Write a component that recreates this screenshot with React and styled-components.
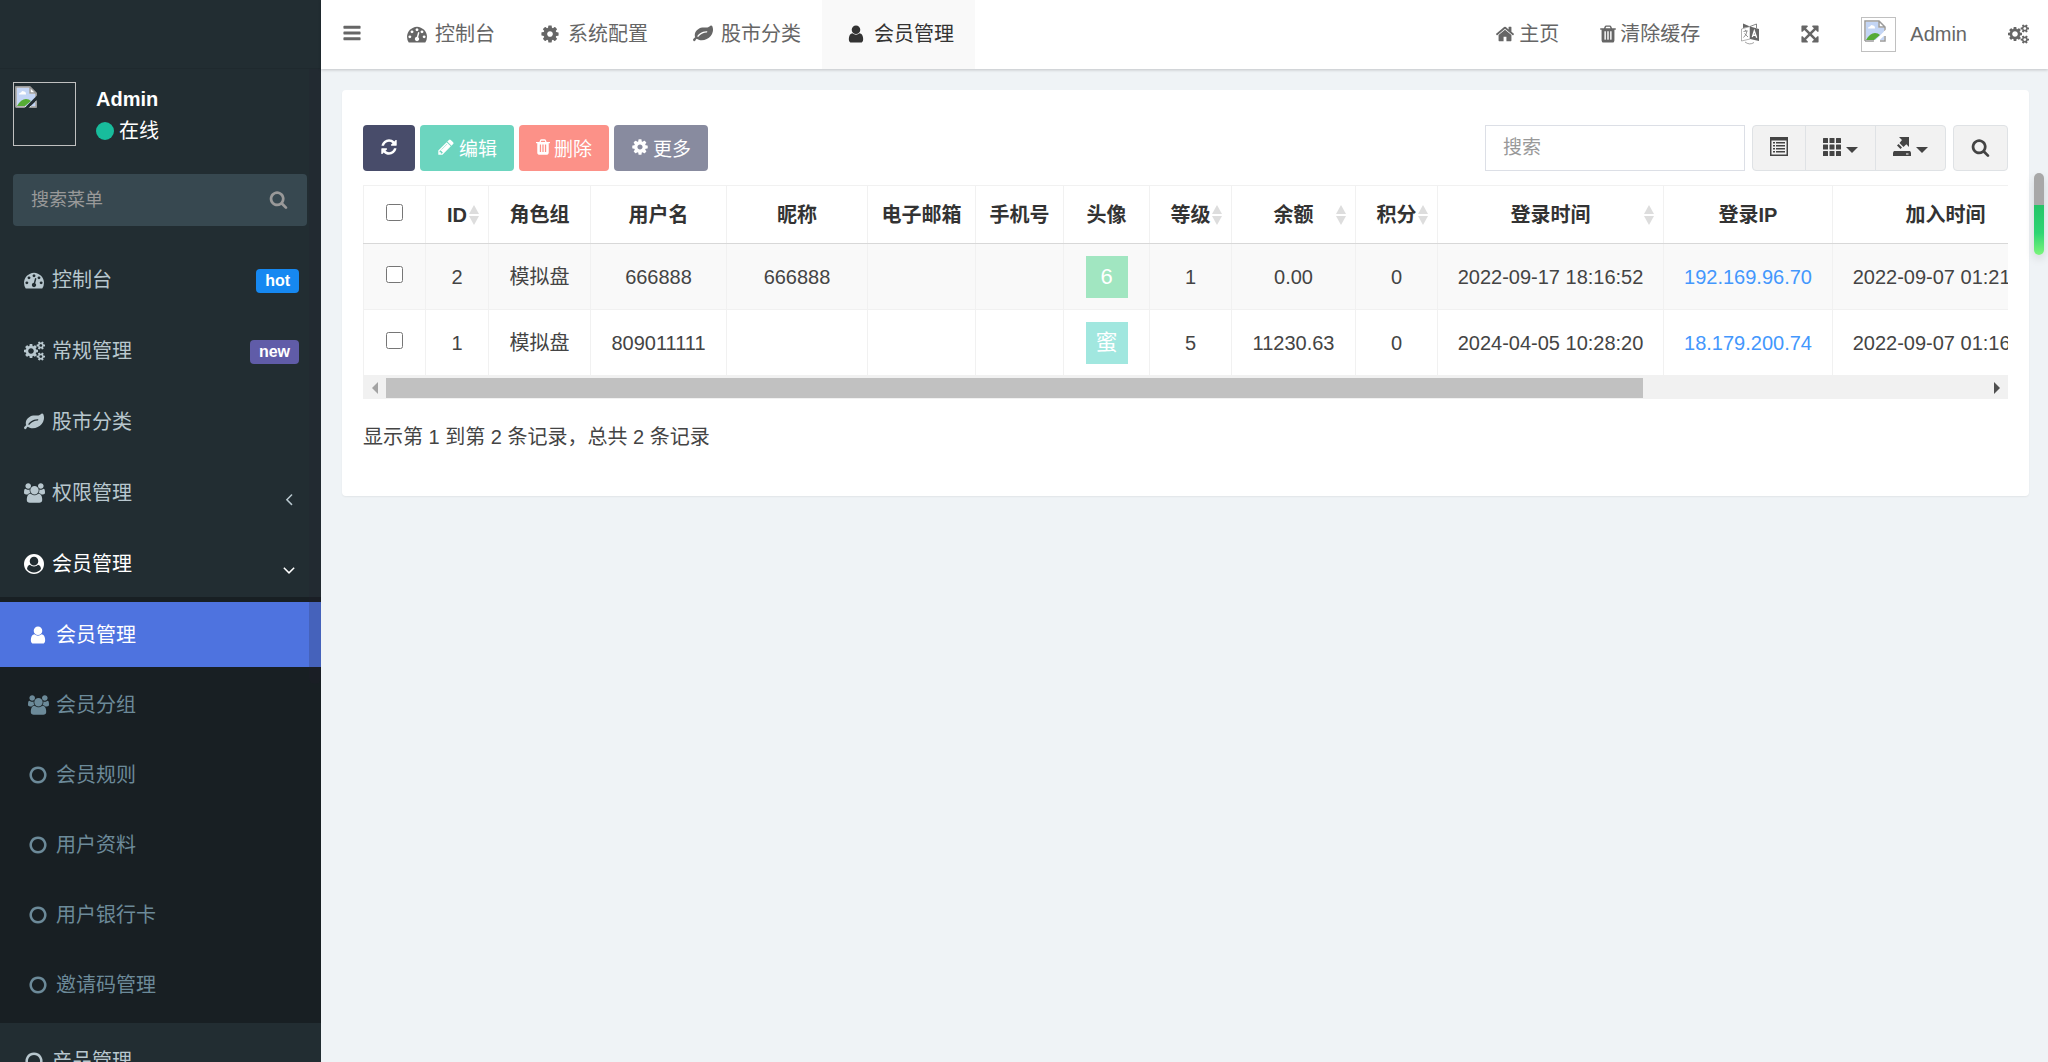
import React from 'react';
import styled, { createGlobalStyle, css } from 'styled-components';

const GlobalStyle = createGlobalStyle`
  * {
    box-sizing: border-box;
  }
  body {
    margin: 0;
    background: #eff3f6;
    color: #444;
    font-family: "Liberation Sans", "Noto Sans CJK SC", sans-serif;
    font-size: 20px;
    line-height: 28px;
  }
  a {
    text-decoration: none;
  }
  button, input {
    font-family: inherit;
  }
`;

/* ---------- icons ---------- */

const ICONS = {
  bars: 'M1664 1344v128q0 26-19 45t-45 19h-1408q-26 0-45-19t-19-45v-128q0-26 19-45t45-19h1408q26 0 45 19t19 45zm0-512v128q0 26-19 45t-45 19h-1408q-26 0-45-19t-19-45v-128q0-26 19-45t45-19h1408q26 0 45 19t19 45zm0-512v128q0 26-19 45t-45 19h-1408q-26 0-45-19t-19-45v-128q0-26 19-45t45-19h1408q26 0 45 19t19 45z',
  dashboard: 'M384 1152q0-53-37.5-90.5t-90.5-37.5-90.5 37.5-37.5 90.5 37.5 90.5 90.5 37.5 90.5-37.5 37.5-90.5zm192-448q0-53-37.5-90.5t-90.5-37.5-90.5 37.5-37.5 90.5 37.5 90.5 90.5 37.5 90.5-37.5 37.5-90.5zm428 481l101-382q6-26-7.5-48.5t-38.5-29.5-48 6.5-30 39.5l-101 382q-60 5-107 43.5t-63 98.5q-20 77 20 146t117 89 146-20 89-117q16-60-6-117t-72-91zm660-33q0-53-37.5-90.5t-90.5-37.5-90.5 37.5-37.5 90.5 37.5 90.5 90.5 37.5 90.5-37.5 37.5-90.5zm-640-640q0-53-37.5-90.5t-90.5-37.5-90.5 37.5-37.5 90.5 37.5 90.5 90.5 37.5 90.5-37.5 37.5-90.5zm448 192q0-53-37.5-90.5t-90.5-37.5-90.5 37.5-37.5 90.5 37.5 90.5 90.5 37.5 90.5-37.5 37.5-90.5zm320 448q0 261-141 483-19 29-54 29h-1402q-35 0-54-29-141-221-141-483 0-182 71-348t191-286 286-191 348-71 348 71 286 191 191 286 71 348z',
  cog: 'M1152 896q0-106-75-181t-181-75-181 75-75 181 75 181 181 75 181-75 75-181zm512-109v222q0 12-8 23t-20 13l-185 28q-19 54-39 91 35 50 107 138 10 12 10 25t-9 23q-27 37-99 108t-94 71q-12 0-26-9l-138-108q-44 23-91 38-16 136-29 186-7 28-36 28h-222q-14 0-24.5-8.5t-11.5-21.5l-28-184q-49-16-90-37l-141 107q-10 9-25 9-14 0-25-11-126-114-165-168-7-10-7-23 0-12 8-23 15-21 51-66.5t54-70.5q-27-50-41-99l-183-27q-13-2-21-12.5t-8-23.5v-222q0-12 8-23t19-13l186-28q14-46 39-92-40-57-107-138-10-12-10-24 0-10 9-23 26-36 98.5-107.5t94.5-71.5q13 0 26 10l138 107q44-23 91-38 16-136 29-186 7-28 36-28h222q14 0 24.5 8.5t11.5 21.5l28 184q49 16 90 37l142-107q9-9 24-9 13 0 25 10 129 119 165 170 7 8 7 22 0 12-8 23-15 21-51 66.5t-54 70.5q26 50 41 98l183 28q13 2 21 12.5t8 23.5z',
  cogs: 'M896 896q0-106-75-181t-181-75-181 75-75 181 75 181 181 75 181-75 75-181zm768 512q0-52-38-90t-90-38-90 38-38 90q0 53 37.5 90.5t90.5 37.5 90.5-37.5 37.5-90.5zm0-1024q0-52-38-90t-90-38-90 38-38 90q0 53 37.5 90.5t90.5 37.5 90.5-37.5 37.5-90.5zm-384 421v185q0 10-7 19.5t-16 10.5l-155 24q-11 35-32 76 34 48 90 115 7 11 7 20 0 12-7 19-23 30-82.5 89.5t-78.5 59.5q-11 0-21-7l-115-90q-37 19-77 31-11 108-23 155-7 24-30 24h-186q-11 0-20-7.5t-10-17.5l-23-153q-34-10-75-31l-118 89q-7 7-20 7-11 0-21-8-144-133-144-160 0-9 7-19 10-14 41-53t47-61q-23-44-35-82l-152-24q-10-1-17-9.5t-7-19.5v-185q0-10 7-19.5t16-10.5l155-24q11-35 32-76-34-48-90-115-7-11-7-20 0-12 7-20 22-30 82-89t79-59q11 0 21 7l115 90q34-18 77-32 11-108 23-154 7-24 30-24h186q11 0 20 7.5t10 17.5l23 153q34 10 75 31l118-89q8-7 20-7 11 0 21 8 144 133 144 160 0 8-7 19-12 16-42 54t-45 60q23 48 34 82l152 23q10 2 17 10.5t7 19.5zm640 533v140q0 16-149 31-12 27-30 52 51 113 51 138 0 4-4 7-122 71-124 71-8 0-46-47t-52-68q-20 2-30 2t-30-2q-14 21-52 68t-46 47q-2 0-124-71-4-3-4-7 0-25 51-138-18-25-30-52-149-15-149-31v-140q0-16 149-31 13-29 30-52-51-113-51-138 0-4 4-7 4-2 35-20t59-34 30-16q8 0 46 46.5t52 67.5q20-2 30-2t30 2q51-71 92-112l6-2q4 0 124 70 4 3 4 7 0 25-51 138 17 23 30 52 149 15 149 31zm0-1024v140q0 16-149 31-12 27-30 52 51 113 51 138 0 4-4 7-122 71-124 71-8 0-46-47t-52-68q-20 2-30 2t-30-2q-14 21-52 68t-46 47q-2 0-124-71-4-3-4-7 0-25 51-138-18-25-30-52-149-15-149-31v-140q0-16 149-31 13-29 30-52-51-113-51-138 0-4 4-7 4-2 35-20t59-34 30-16q8 0 46 46.5t52 67.5q20-2 30-2t30 2q51-71 92-112l6-2q4 0 124 70 4 3 4 7 0 25-51 138 17 23 30 52 149 15 149 31z',
  leaf: 'M1280 704q0-26-19-45t-45-19q-172 0-318 49.5t-259.5 134-235.5 219.5q-19 21-19 45 0 26 19 45t45 19q24 0 45-19 27-24 74-71t67-66q137-124 268.5-176t313.5-52q26 0 45-19t19-45zm512-198q0 95-20 193-46 224-184.5 383t-357.5 268q-214 108-438 108-148 0-286-47-15-5-88-42t-96-37q-16 0-39.5 32t-45 70-52.5 70-60 32q-43 0-63.5-17.5t-45.5-59.5q-2-4-6-11t-5.5-10-3-9.5-1.5-13.5q0-35 31-73.5t68-65.5 68-56 31-48q0-4-14-38t-16-44q-9-51-9-104 0-115 43.5-220t119-184.5 170.5-139 204-95.5q55-18 145-25.5t179.5-9 178.5-6 163.5-24 113.5-56.5l29.5-29.5 29.5-28 27-20 36.5-16 43.5-4.5q39 0 70.5 46t47.5 112 24 124 8 96z',
  group: 'M593 896q-162 5-265 128h-134q-82 0-138-40.5t-56-118.5q0-353 124-353 6 0 43.5 21t97.5 42.5 119 21.5q67 0 133-23-5 37-5 66 0 139 81 256zm1071 637q0 120-73 189.5t-194 69.5h-874q-121 0-194-69.5t-73-189.5q0-53 3.5-103.5t14-109 26.5-108.5 43-97.5 62-81 85.5-53.5 111.5-20q10 0 43 21.5t73 48 107 48 135 21.5 135-21.5 107-48 73-48 43-21.5q61 0 111.5 20t85.5 53.5 62 81 43 97.5 26.5 108.5 14 109 3.5 103.5zm-1024-1277q0 106-75 181t-181 75-181-75-75-181 75-181 181-75 181 75 75 181zm704 384q0 159-112.5 271.5t-271.5 112.5-271.5-112.5-112.5-271.5 112.5-271.5 271.5-112.5 271.5 112.5 112.5 271.5zm576 225q0 78-56 118.5t-138 40.5h-134q-103-123-265-128 81-117 81-256 0-29-5-66 66 23 133 23 59 0 119-21.5t97.5-42.5 43.5-21q124 0 124 353zm-128-609q0 106-75 181t-181 75-181-75-75-181 75-181 181-75 181 75 75 181z',
  user: 'M1536 1399q0 109-62.5 187t-150.5 78h-854q-88 0-150.5-78t-62.5-187q0-85 8.5-160.5t31.5-152 58.5-131 94-89 134.5-34.5q131 128 313 128t313-128q76 0 134.5 34.5t94 89 58.5 131 31.5 152 8.5 160.5zm-256-887q0 159-112.5 271.5t-271.5 112.5-271.5-112.5-112.5-271.5 112.5-271.5 271.5-112.5 271.5 112.5 112.5 271.5z',
  userCircle: 'M1523 1339q-22-155-87.5-257.5t-184.5-118.5q-67 74-159.5 115.5t-195.5 41.5-195.5-41.5-159.5-115.5q-119 16-184.5 118.5t-87.5 257.5q106 150 271 237.5t356 87.5 356-87.5 271-237.5zm-243-699q0-159-112.5-271.5t-271.5-112.5-271.5 112.5-112.5 271.5 112.5 271.5 271.5 112.5 271.5-112.5 112.5-271.5zm512 256q0 182-71 347.5t-190.5 286-285.5 191.5-349 71q-182 0-348-71t-286-191-191-286-71-348 71-348 191-286 286-191 348-71 348 71 286 191 191 286 71 348z',
  circle: 'M896 352q-148 0-273 73t-198 198-73 273 73 273 198 198 273 73 273-73 198-198 73-273-73-273-198-198-273-73zm768 544q0 209-103 385.5t-279.5 279.5-385.5 103-385.5-103-279.5-279.5-103-385.5 103-385.5 279.5-279.5 385.5-103 385.5 103 279.5 279.5 103 385.5z',
  angleLeft: 'M1203 544q0 13-10 23l-393 393 393 393q10 10 10 23t-10 23l-50 50q-10 10-23 10t-23-10l-466-466q-10-10-10-23t10-23l466-466q10-10 23-10t23 10l50 50q10 10 10 23z',
  angleDown: 'M1395 736q0 13-10 23l-466 466q-10 10-23 10t-23-10l-466-466q-10-10-10-23t10-23l50-50q10-10 23-10t23 10l393 393 393-393q10-10 23-10t23 10l50 50q10 10 10 23z',
  search: 'M1216 832q0-185-131.5-316.5t-316.5-131.5-316.5 131.5-131.5 316.5 131.5 316.5 316.5 131.5 316.5-131.5 131.5-316.5zm512 832q0 52-38 90t-90 38q-54 0-90-38l-343-342q-179 124-399 124-143 0-273.5-55.5t-225-150-150-225-55.5-273.5 55.5-273.5 150-225 225-150 273.5-55.5 273.5 55.5 225 150 150 225 55.5 273.5q0 220-124 399l343 343q37 37 37 90z',
  home: 'M1472 992v480q0 26-19 45t-45 19h-384v-384h-256v384h-384q-26 0-45-19t-19-45v-480q0-1 .5-3t.5-3l575-474 575 474q1 2 1 6zm223-69l-62 74q-8 9-21 11h-3q-13 0-21-7l-692-577-692 577q-12 8-24 7-13-2-21-11l-62-74q-8-10-7-23.5t11-21.5l719-599q32-26 76-26t76 26l244 204v-195q0-14 9-23t23-9h192q14 0 23 9t9 23v408l219 182q10 8 11 21.5t-7 23.5z',
  trash: 'M704 1376v-704q0-14-9-23t-23-9h-64q-14 0-23 9t-9 23v704q0 14 9 23t23 9h64q14 0 23-9t9-23zm256 0v-704q0-14-9-23t-23-9h-64q-14 0-23 9t-9 23v704q0 14 9 23t23 9h64q14 0 23-9t9-23zm256 0v-704q0-14-9-23t-23-9h-64q-14 0-23 9t-9 23v704q0 14 9 23t23 9h64q14 0 23-9t9-23zm-544-992h448l-48-117q-7-9-17-11h-317q-10 2-17 11zm928 32v64q0 14-9 23t-23 9h-96v948q0 83-47 143.5t-113 60.5h-832q-66 0-113-58.5t-47-141.5v-952h-96q-14 0-23-9t-9-23v-64q0-14 9-23t23-9h309l70-167q15-37 54-63t79-26h320q40 0 79 26t54 63l70 167h309q14 0 23 9t9 23z',
  pencil: 'M491 1536l91-91-235-235-91 91v107h128v128h107zm523-928q0-22-22-22-10 0-17 7l-542 542q-7 7-7 17 0 22 22 22 10 0 17-7l542-542q7-7 7-17zm-54-192l416 416-832 832h-416v-416zm683 96q0 53-37 90l-166 166-416-416 166-165q36-38 90-38 53 0 91 38l235 234q37 39 37 91z',
  refresh: 'M1639 1056q0 5-1 7-64 268-268 434.5t-478 166.5q-146 0-282.5-55t-243.5-157l-129 129q-19 19-45 19t-45-19-19-45v-448q0-26 19-45t45-19h448q26 0 45 19t19 45-19 45l-137 137q71 66 161 102t187 36q134 0 250-65t186-179q11-17 53-117 8-23 30-23h192q13 0 22.5 9.5t9.5 22.5zm25-800v448q0 26-19 45t-45 19h-448q-26 0-45-19t-19-45 19-45l138-138q-148-137-349-137-134 0-250 65t-186 179q-11 17-53 117-8 23-30 23h-199q-13 0-22.5-9.5t-9.5-22.5v-7q65-268 270-434.5t480-166.5q146 0 284 55.5t245 156.5l130-129q19-19 45-19t45 19 19 45z',
  expand: 'M1411 541l-355 355 355 355 144-144q29-31 70-14 39 17 39 59v448q0 26-19 45t-45 19h-448q-42 0-59-40-17-39 14-69l144-144-355-355-355 355 144 144q31 30 14 69-17 40-59 40h-448q-26 0-45-19t-19-45v-448q0-42 40-59 39-17 69 14l144 144 355-355-355-355-144 144q-19 19-45 19-12 0-24-5-40-17-40-59v-448q0-26 19-45t45-19h448q42 0 59 40 17 39-14 69l-144 144 355 355 355-355-144-144q-31-30-14-69 17-40 59-40h448q26 0 45 19t19 45v448q0 42-39 59-13 5-25 5-26 0-45-19z',
};

// glyphs that are not as wide as they are tall: [left, width]
const BOXES = {
  cogs: [0, 1920],
  group: [0, 1920],
  trash: [192, 1408],
};

const Svg = styled.svg`
  display: block;
  flex: none;
  fill: currentColor;
`;

const Icon = ({ name, size = 20 }) => {
  const [left, width] = BOXES[name] || [0, 1792];
  return (
    <Svg
      height={size}
      width={Math.round((size * width) / 1792)}
      viewBox={`${left} 0 ${width} 1792`}
      aria-hidden="true"
    >
      <path d={ICONS[name]} />
    </Svg>
  );
};

const LanguageIcon = () => (
  <Svg width="18" height="22" viewBox="0 0 18 22" aria-hidden="true">
    <path d="M2 0.500 L9 3.500 L2 5z" />
    <path d="M9 3.500 L15.500 1 V5" fill="none" stroke="currentColor" strokeWidth="0.800" />
    <path d="M0.500 6 L9 3.500 V16 L0.500 18z" fill="#fff" stroke="currentColor" strokeWidth="0.500" />
    <path d="M9 3.500 L18 6 V18 L9 16z" />
    <path d="M2.500 8.500 L6.500 7.800 M4.300 6.800 L4.800 8 M6 8 Q5.500 12 2.500 14.500 M3.500 10.500 L7 14" fill="none" stroke="currentColor" strokeWidth="0.700" />
    <path d="M11.300 14 L13.300 7.800 L15.700 14.800 M12 12 L14.800 12.400" fill="none" stroke="#fff" strokeWidth="1.300" />
    <path d="M4 19 Q8.500 22.500 13 19.500" fill="none" stroke="currentColor" strokeWidth="0.600" />
  </Svg>
);

const ListIcon = () => (
  <Svg width="18" height="20" viewBox="0 0 18 20" aria-hidden="true">
    <path d="M0 0H18V19H0z M1.500 3.500V17.500H16.500V3.500z" fillRule="evenodd" />
    <path d="M3 5h2v1.500h-2z M6 5h9v1.500h-9z M3 8h2v1.500h-2z M6 8h9v1.500h-9z M3 11h2v1.500h-2z M6 11h9v1.500h-9z M3 14h2v1.500h-2z M6 14h9v1.500h-9z" />
  </Svg>
);

const GridIcon = () => (
  <Svg width="18" height="18" viewBox="0 0 18 18" aria-hidden="true">
    {[0, 6.5, 13].map((y) =>
      [0, 6.5, 13].map((x) => <rect key={`${x}-${y}`} x={x} y={y} width="5" height="5" rx="0.500" />)
    )}
  </Svg>
);

const ExportIcon = () => (
  <Svg width="18" height="20" viewBox="0 0 18 20" aria-hidden="true">
    <path d="M6 0H16V10L13.300 7.300L10.500 10L6.500 6L9 3z" />
    <path d="M5.500 7L9 10.500L7.500 12L4 8.500z" />
    <path d="M1 14H17L18 15.500V19H0V15.500z" />
    <path d="M13 16.500h2.500v1h-2.500z" fill="#fff" />
  </Svg>
);

const BrokenImageIcon = () => (
  <Svg width="22" height="22" viewBox="0 0 22 22" aria-hidden="true">
    <path d="M0.500 0.500H15L21.500 7V21.500H0.500z" fill="#fff" />
    <path d="M2 2H14.500V8H20V20H2z" fill="#c3d5f5" />
    <path d="M4 8.500q0-2 2-2q1-2.500 3-1q2 0 2 3z" fill="#fff" />
    <path d="M2 20Q6 13 11 13Q14 13 16 15L10 20z" fill="#56ab35" />
    <path d="M1 21V1H15L21 7V11M15 1V7H21" fill="none" stroke="#9a9a9a" strokeWidth="1.500" />
    <path d="M1 21H10M16 21H21V16" fill="none" stroke="#9a9a9a" strokeWidth="1.500" />
    <path d="M22 9.500V14L13.500 22H9.500z" fill="var(--cut)" />
  </Svg>
);

/* ---------- shell ---------- */

const Layout = styled.div`
  display: flex;
  height: 100vh;
  overflow: hidden;
`;

const Sidebar = styled.aside`
  position: relative;
  flex: none;
  width: 321px;
  overflow: hidden;
  background: #222d32;
  color: #b8c7ce;
`;

const Brand = styled.div`
  height: 69px;
  border-bottom: 1px solid #1f292e;
`;

const ScrollRail = styled.div`
  position: absolute;
  top: 69px;
  right: 0;
  width: 12px;
  height: 615px;
  border-radius: 0 0 6px 6px;
  background: rgba(34, 28, 46, 0.2);
`;

const UserPanel = styled.div`
  display: flex;
  gap: 20px;
  padding: 13px 13px 28px;
  color: #fff;
`;

const Picture = styled.div`
  --cut: ${(p) => (p.$dark ? '#222d32' : '#fff')};
  width: ${(p) => (p.$dark ? 63 : 35)}px;
  height: ${(p) => (p.$dark ? 64 : 35)}px;
  padding: ${(p) => (p.$dark ? '3px 1px' : '2px')};
  border: 1px solid #c0c0c0;
`;

const UserInfo = styled.div`
  display: flex;
  flex-direction: column;
  gap: 4px;
  padding-top: 3px;
`;

const UserName = styled.strong`
  font-weight: 700;
`;

const Status = styled.a`
  display: flex;
  align-items: center;
  gap: 5px;
  color: #fff;

  &::before {
    content: '';
    width: 18px;
    height: 18px;
    border-radius: 50%;
    background: #18bc9c;
  }
`;

const MenuSearch = styled.form`
  display: flex;
  height: 52px;
  margin: 0 14px 21px 13px;
  border-radius: 4px;
  background: #374850;
  color: #999;

  input {
    flex: 1;
    min-width: 0;
    padding: 0 18px;
    border: 0;
    outline: 0;
    background: transparent;
    color: #fff;
    font-size: 18px;
  }
  input::placeholder {
    color: #999;
    opacity: 1;
  }
  button {
    padding: 0 19px 2px;
    border: 0;
    background: transparent;
    color: inherit;
  }
`;

const Menu = styled.ul`
  display: flex;
  flex-direction: column;
  gap: 5px;
  margin: 0;
  padding: 0;
  list-style: none;
`;

const MenuLink = styled.a`
  display: flex;
  align-items: center;
  height: 66px;
  padding: 0 22px;
  color: ${(p) => (p.$open ? '#fff' : '#b8c7ce')};
`;

const MenuIcon = styled.span`
  display: flex;
  justify-content: center;
  flex: none;
  width: 24px;
  margin-right: 6px;
`;

const MenuLabel = styled.span`
  flex: 1;
`;

const Badge = styled.small`
  margin-top: 2px;
  padding: 0 9px;
  border-radius: 4px;
  background: ${(p) => p.$color};
  color: #fff;
  font-size: 16px;
  font-weight: 700;
  line-height: 24px;
`;

const Arrow = styled.span`
  padding-top: 11px;
`;

const SubMenu = styled(Menu)`
  padding: 5px 0 6px;
  background: #181f23;
`;

const SubLink = styled.a`
  display: flex;
  align-items: center;
  height: 65px;
  padding: 0 26px;
  color: #6c8a99;

  ${(p) =>
    p.$active &&
    css`
      background: #4e73df;
      color: #fff;
    `}
`;

/* ---------- top bar ---------- */

const Main = styled.div`
  position: relative;
  flex: 1;
  min-width: 0;
`;

const TopBar = styled.header`
  display: flex;
  align-items: center;
  height: 69px;
  padding-right: 19px;
  background: #fff;
  box-shadow: 0 1px 3px rgba(0, 0, 0, 0.2);
  color: #666;

  a {
    color: inherit;
  }
`;

const Toggle = styled.button`
  width: 62px;
  padding: 0 21px 3px;
  border: 0;
  background: transparent;
  color: inherit;
`;

const Tabs = styled.nav`
  display: flex;
  flex: 1;
  height: 100%;
`;

const Tab = styled.a`
  display: flex;
  align-items: center;
  height: 100%;
  padding: 0 21px 1px 22px;

  && {
    color: ${(p) => (p.$active ? '#333' : '#666')};
  }
  background: ${(p) => (p.$active ? '#f9f9f9' : 'transparent')};
`;

const TopLinks = styled.div`
  display: flex;
  align-items: center;
  gap: 41px;
  padding-bottom: 1px;

  a {
    display: flex;
    align-items: center;
    gap: 4px;
  }
`;

const Account = styled.a`
  && {
    gap: 14px;
  }
`;

/* ---------- panel ---------- */

const Panel = styled.section`
  margin: 21px 19px 0 21px;
  padding: 35px 21px 45px;
  border-radius: 4px;
  background: #fff;
  box-shadow: 0 1px 2px rgba(0, 0, 0, 0.06);
`;

const Toolbar = styled.div`
  display: flex;
  gap: 5px;
  margin-bottom: 14px;
`;

const Button = styled.button`
  display: flex;
  align-items: center;
  gap: 4px;
  height: 46px;
  padding: 0 17px 2px;
  border: 0;
  border-radius: 4px;
  background: ${(p) => p.$color};
  color: #fff;
  font-size: 19px;
`;

const Tools = styled.div`
  display: flex;
  gap: 7px;
  margin-left: auto;
`;

const SearchInput = styled.input`
  width: 260px;
  height: 46px;
  padding: 0 17px;
  border: 1px solid #dcdfe6;
  border-radius: 0;
  outline: 0;
  color: #333;
  font-size: 19px;

  &::placeholder {
    color: #999;
    opacity: 1;
  }
`;

const ButtonGroup = styled.div`
  display: flex;
  overflow: hidden;
  border: 1px solid #dfe2e5;
  border-radius: 4px;
  background: #f2f2f2;
`;

const ToolButton = styled.button`
  display: flex;
  align-items: center;
  gap: 5px;
  height: 44px;
  padding: 0 17px 2px;
  border: 0;
  border-left: 1px solid #dfe2e5;
  background: transparent;
  color: #444;

  &:first-child {
    border-left: 0;
  }
`;

const Caret = styled.span`
  margin-top: 5px;
  border: 6px solid transparent;
  border-top-color: currentColor;
  border-bottom: 0;
`;

const TableWrap = styled.div`
  overflow: hidden;
`;

const Table = styled.table`
  table-layout: fixed;
  width: 1695px;
  border-collapse: collapse;
  text-align: center;

  th, td {
    height: 66px;
    padding: 0;
    border: 1px solid #f1f1f1;
    white-space: nowrap;
  }
  th {
    height: 58px;
    border-bottom: 1px solid #d8d8d8;
    color: #333;
  }
  tbody tr:nth-child(odd) {
    background: #f9f9f9;
  }
  input {
    display: block;
    width: 17px;
    height: 17px;
    margin: 0 auto 5px;
  }
  a {
    color: #4397fd;
  }
`;

const HeadCell = styled.div`
  display: grid;
  grid-template-columns: 1fr auto 1fr;
  align-items: center;
`;

const HeadLabel = styled.span`
  grid-column: 2;
`;

const Sorter = styled.span`
  justify-self: end;
  display: grid;
  gap: 2px;
  margin-right: 9px;

  &::before, &::after {
    content: '';
    border: 5px solid transparent;
  }
  &::before {
    border-top: 0;
    border-bottom: 9px solid #ddd;
  }
  &::after {
    border-bottom: 0;
    border-top: 9px solid #ddd;
  }
`;

const Avatar = styled.div`
  width: 42px;
  height: 42px;
  margin: 0 auto;
  background: ${(p) => p.$color};
  color: #fff;
  font-size: 22px;
  line-height: 42px;
`;

const ScrollTrack = styled.div`
  display: flex;
  align-items: center;
  height: 23px;
  background: #f1f1f1;
`;

const ScrollArrow = styled.span`
  flex: none;
  width: 23px;
  display: flex;
  justify-content: center;

  &::before {
    content: '';
    border: 6px solid transparent;
    ${(p) =>
      p.$right
        ? 'border-right: 0; border-left-color: #505050;'
        : 'border-left: 0; border-right-color: #a3a3a3;'}
  }
`;

const ScrollLane = styled.div`
  flex: 1;
`;

const ScrollThumb = styled.div`
  width: ${(p) => p.$size}%;
  height: 20px;
  background: #c1c1c1;
`;

const Summary = styled.p`
  margin: 24px 0 0;
`;

const PageMeter = styled.div`
  position: absolute;
  top: 173px;
  right: 4px;
  width: 10px;
  height: 82px;
  border-radius: 5px;
  background: linear-gradient(#a8a8a8 0 32px, #25c468 32px, #2ed573 60px, #7bf57b);
  box-shadow: 0 4px 10px rgba(0, 0, 0, 0.12);
`;

/* ---------- data ---------- */

const menu = [
  { icon: 'dashboard', label: '控制台', badge: 'hot', color: '#1688f1' },
  { icon: 'cogs', label: '常规管理', badge: 'new', color: '#605ca8' },
  { icon: 'leaf', label: '股市分类' },
  { icon: 'group', label: '权限管理', arrow: 'angleLeft' },
  {
    icon: 'userCircle',
    label: '会员管理',
    arrow: 'angleDown',
    children: [
      { icon: 'user', label: '会员管理', active: true },
      { icon: 'group', label: '会员分组' },
      { icon: 'circle', label: '会员规则' },
      { icon: 'circle', label: '用户资料' },
      { icon: 'circle', label: '用户银行卡' },
      { icon: 'circle', label: '邀请码管理' },
    ],
  },
  { icon: 'circle', label: '产品管理' },
];

const tabs = [
  { icon: 'dashboard', label: '控制台' },
  { icon: 'cog', label: '系统配置' },
  { icon: 'leaf', label: '股市分类' },
  { icon: 'user', label: '会员管理', active: true },
];

const columns = [
  { key: 'id', label: 'ID', width: 63, sort: true },
  { key: 'group', label: '角色组', width: 102 },
  { key: 'username', label: '用户名', width: 136 },
  { key: 'nickname', label: '昵称', width: 141 },
  { key: 'email', label: '电子邮箱', width: 108 },
  { key: 'mobile', label: '手机号', width: 88 },
  { key: 'avatar', label: '头像', width: 86 },
  { key: 'level', label: '等级', width: 82, sort: true },
  { key: 'money', label: '余额', width: 124, sort: true },
  { key: 'score', label: '积分', width: 82, sort: true },
  { key: 'logintime', label: '登录时间', width: 226, sort: true },
  { key: 'loginip', label: '登录IP', width: 169 },
  { key: 'jointime', label: '加入时间', width: 226 },
];

const rows = [
  {
    id: 2,
    group: '模拟盘',
    username: '666888',
    nickname: '666888',
    avatar: '6',
    color: '#a1e6c1',
    level: 1,
    money: '0.00',
    score: 0,
    logintime: '2022-09-17 18:16:52',
    loginip: '192.169.96.70',
    jointime: '2022-09-07 01:21:40',
  },
  {
    id: 1,
    group: '模拟盘',
    username: '809011111',
    nickname: '',
    avatar: '蜜',
    color: '#a1e7df',
    level: 5,
    money: '11230.63',
    score: 0,
    logintime: '2024-04-05 10:28:20',
    loginip: '18.179.200.74',
    jointime: '2022-09-07 01:16:20',
  },
];

const Cell = ({ column, row }) => {
  if (column.key === 'avatar') return <Avatar $color={row.color}>{row.avatar}</Avatar>;
  if (column.key === 'loginip') return <a href="#ip">{row.loginip}</a>;
  return row[column.key];
};

const SideMenu = () => (
  <Menu>
    {menu.map((item) => (
      <li key={item.label}>
        <MenuLink href="#menu" $open={!!item.children}>
          <MenuIcon><Icon name={item.icon} /></MenuIcon>
          <MenuLabel>{item.label}</MenuLabel>
          {item.badge && <Badge $color={item.color}>{item.badge}</Badge>}
          {item.arrow && <Arrow><Icon name={item.arrow} /></Arrow>}
        </MenuLink>
        {item.children && (
          <SubMenu>
            {item.children.map((child) => (
              <li key={child.label}>
                <SubLink href="#sub" $active={child.active}>
                  <MenuIcon><Icon name={child.icon} /></MenuIcon>
                  {child.label}
                </SubLink>
              </li>
            ))}
          </SubMenu>
        )}
      </li>
    ))}
  </Menu>
);

const MemberTable = () => (
  <TableWrap>
    <Table>
      <colgroup>
        <col width="62" />
        {columns.map((c) => <col key={c.key} width={c.width} />)}
      </colgroup>
      <thead>
        <tr>
          <th><input type="checkbox" aria-label="全选" /></th>
          {columns.map((c) => (
            <th key={c.key}>
              <HeadCell>
                <HeadLabel>{c.label}</HeadLabel>
                {c.sort && <Sorter />}
              </HeadCell>
            </th>
          ))}
        </tr>
      </thead>
      <tbody>
        {rows.map((row) => (
          <tr key={row.id}>
            <td><input type="checkbox" aria-label={`选择 ${row.id}`} /></td>
            {columns.map((c) => (
              <td key={c.key}><Cell column={c} row={row} /></td>
            ))}
          </tr>
        ))}
      </tbody>
    </Table>
  </TableWrap>
);

const App = () => (
  <>
    <GlobalStyle />
    <Layout>
      <Sidebar>
        <Brand />
        <UserPanel>
          <Picture $dark><BrokenImageIcon /></Picture>
          <UserInfo>
            <UserName>Admin</UserName>
            <Status href="#status">在线</Status>
          </UserInfo>
        </UserPanel>
        <MenuSearch>
          <input type="text" placeholder="搜索菜单" aria-label="搜索菜单" />
          <button type="button" aria-label="搜索"><Icon name="search" size={19} /></button>
        </MenuSearch>
        <SideMenu />
        <ScrollRail />
      </Sidebar>

      <Main>
        <TopBar>
          <Toggle type="button" aria-label="菜单"><Icon name="bars" /></Toggle>
          <Tabs>
            {tabs.map((tab) => (
              <Tab key={tab.label} href="#tab" $active={tab.active}>
                <MenuIcon><Icon name={tab.icon} /></MenuIcon>
                {tab.label}
              </Tab>
            ))}
          </Tabs>
          <TopLinks>
            <a href="#home"><Icon name="home" />主页</a>
            <a href="#cache"><Icon name="trash" />清除缓存</a>
            <a href="#lang" aria-label="语言"><LanguageIcon /></a>
            <a href="#full" aria-label="全屏"><Icon name="expand" /></a>
            <Account href="#account">
              <Picture><BrokenImageIcon /></Picture>
              Admin
            </Account>
            <a href="#settings" aria-label="设置"><Icon name="cogs" /></a>
          </TopLinks>
        </TopBar>

        <Panel>
          <Toolbar>
            <Button $color="#484c6a" aria-label="刷新"><Icon name="refresh" size={18} /></Button>
            <Button $color="#6cd5bf"><Icon name="pencil" size={18} />编辑</Button>
            <Button $color="#fc9188"><Icon name="trash" size={18} />删除</Button>
            <Button $color="#888b9f"><Icon name="cog" size={18} />更多</Button>
            <Tools>
              <SearchInput type="text" placeholder="搜索" aria-label="搜索" />
              <ButtonGroup>
                <ToolButton aria-label="切换"><ListIcon /></ToolButton>
                <ToolButton aria-label="列"><GridIcon /><Caret /></ToolButton>
                <ToolButton aria-label="导出"><ExportIcon /><Caret /></ToolButton>
              </ButtonGroup>
              <ButtonGroup>
                <ToolButton aria-label="搜索"><Icon name="search" size={19} /></ToolButton>
              </ButtonGroup>
            </Tools>
          </Toolbar>
          <MemberTable />
          <ScrollTrack>
            <ScrollArrow />
            <ScrollLane><ScrollThumb $size={78.6} /></ScrollLane>
            <ScrollArrow $right />
          </ScrollTrack>
          <Summary>显示第 1 到第 2 条记录，总共 2 条记录</Summary>
        </Panel>
        <PageMeter />
      </Main>
    </Layout>
  </>
);

export default App;
